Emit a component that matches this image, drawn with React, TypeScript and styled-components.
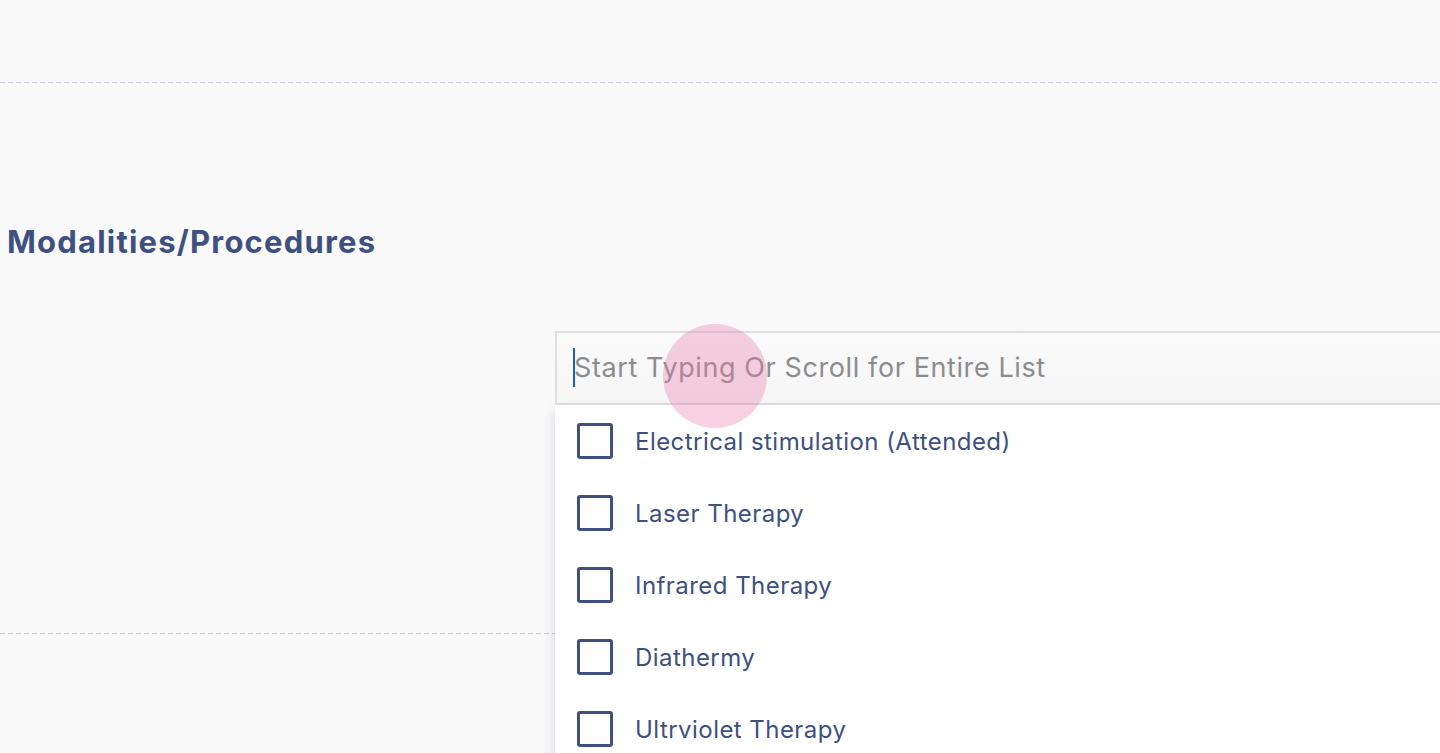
import React from 'react';
import styled, { createGlobalStyle } from 'styled-components';

const GlobalStyle = createGlobalStyle`
  html, body {
    margin: 0;
    padding: 0;
    background: #f9f9fa;
    overflow: hidden;
  }
  body {
    font-family: Inter, "Open Sans", sans-serif;
  }
`;

const options = [
  'Electrical stimulation (Attended)',
  'Laser Therapy',
  'Infrared Therapy',
  'Diathermy',
  'Ultrviolet Therapy',
];

const App = () => {
  return (
    <Page>
      <GlobalStyle />
      <Divider />
      <Section>
        <Heading>Modalities/Procedures</Heading>
        <FieldRow>
          <Field>
            <InputBox>
              <Caret />
              <Placeholder>Start Typing Or Scroll for Entire List</Placeholder>
            </InputBox>
            <Menu>
              {options.map((label) => (
                <Option key={label}>
                  <Check />
                  <OptionLabel>{label}</OptionLabel>
                </Option>
              ))}
            </Menu>
            <Touch />
          </Field>
        </FieldRow>
      </Section>
      <Divider />
    </Page>
  );
};

const Page = styled.div`
  width: 1440px;
  height: 753px;
  padding-top: 82px;
  box-sizing: border-box;
  overflow: hidden;
`;

const Divider = styled.div`
  height: 1px;
  background: repeating-linear-gradient(to right, #c9cdec 0 5px, transparent 5px 8px);
`;

const Section = styled.section`
  height: 550px;
  padding-top: 140px;
  box-sizing: border-box;
`;

const Heading = styled.h2`
  margin: 0 0 0 7px;
  font-size: 31px;
  line-height: 38px;
  font-weight: 700;
  color: #3d5080;
  letter-spacing: 1.2px;
`;

const FieldRow = styled.div`
  display: flex;
  padding-left: 555px;
  margin-top: 70px;
`;

const Field = styled.div`
  position: relative;
  flex: 1;
  margin-right: -40px;
`;

const InputBox = styled.div`
  height: 74px;
  box-sizing: border-box;
  border: 2px solid #dcdee4;
  background: linear-gradient(#fafafb, #f6f6f7);
  display: flex;
  align-items: center;
  padding-left: 16px;
  padding-bottom: 1px;
`;

const Caret = styled.span`
  width: 2px;
  height: 39px;
  background: #1a5fd0;
  margin-right: -1px;
`;

const Placeholder = styled.span`
  font-size: 27px;
  color: #8c8c8e;
  letter-spacing: 0.6px;
`;

const Menu = styled.ul`
  position: absolute;
  top: 100%;
  left: 0;
  right: 0;
  margin: 0;
  padding: 0;
  list-style: none;
  background: #ffffff;
  box-shadow: -2px 6px 10px rgba(40, 45, 70, 0.12);
  height: 400px;
`;

const Option = styled.li`
  height: 72px;
  display: flex;
  align-items: center;
  padding-left: 22px;
  gap: 22px;
`;

const Check = styled.span`
  width: 36px;
  height: 36px;
  box-sizing: border-box;
  border: 3px solid #3d5080;
  border-radius: 3px;
  flex-shrink: 0;
`;

const OptionLabel = styled.span`
  font-size: 24px;
  color: #3d5080;
  letter-spacing: 0.45px;
`;

const Touch = styled.div`
  position: absolute;
  left: 108px;
  top: -7px;
  width: 104px;
  height: 104px;
  border-radius: 50%;
  background: rgba(233, 120, 170, 0.35);
  pointer-events: none;
`;

export default App;
